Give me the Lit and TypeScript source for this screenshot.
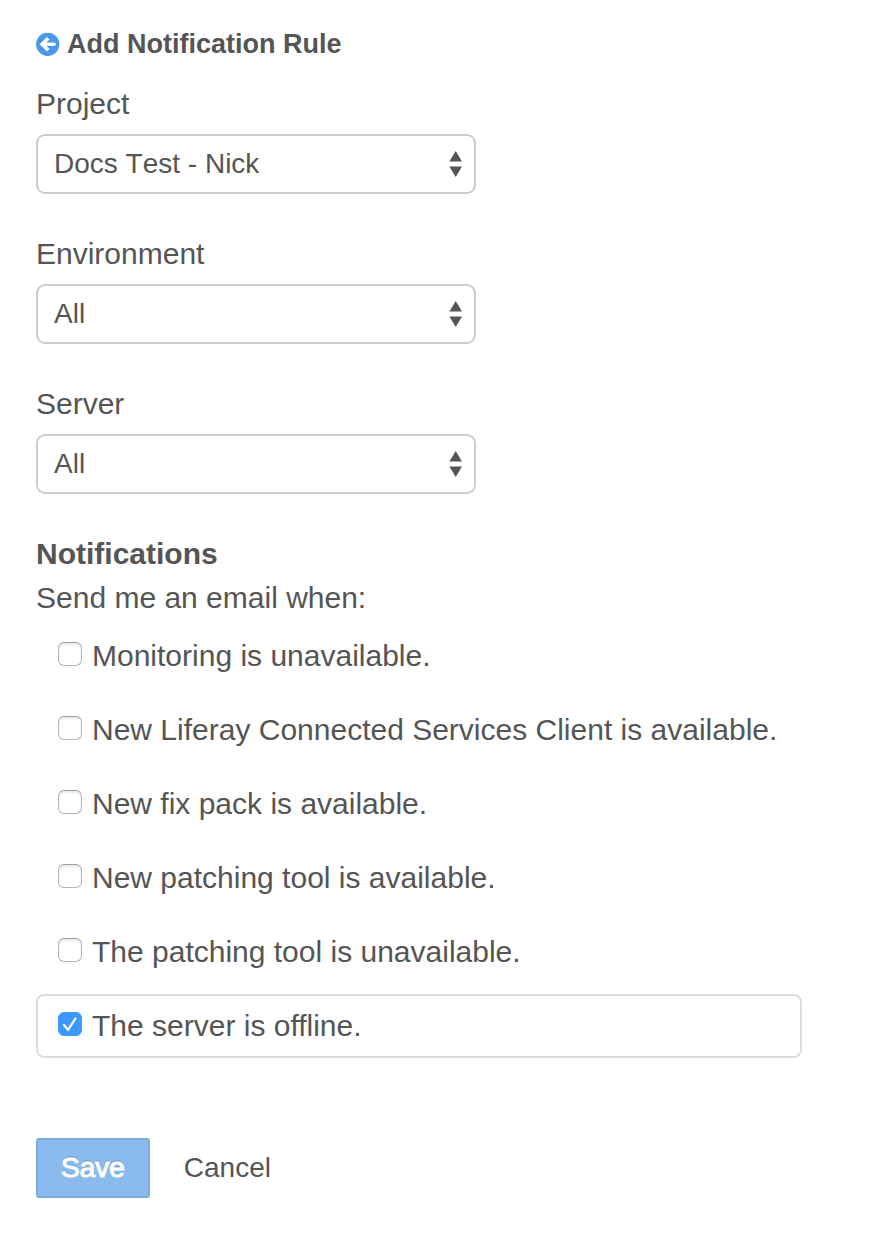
import { LitElement, html, css } from "lit";
import { customElement } from "lit/decorators.js";

interface Field {
  id: string;
  label: string;
  value: string;
}

interface Rule {
  id: string;
  label: string;
  checked: boolean;
}

const FIELDS: Field[] = [
  { id: "project", label: "Project", value: "Docs Test - Nick" },
  { id: "environment", label: "Environment", value: "All" },
  { id: "server", label: "Server", value: "All" },
];

@customElement("app-root")
export class AppRoot extends LitElement {
  static properties = { rules: { state: true } };

  declare rules: Rule[];

  static styles = css`
    :host {
      display: block;
      min-height: 100vh;
      box-sizing: border-box;
      padding: 24px 36px 44px;
      background: #fff;
      color: #555;
      font: 30px/40px "Liberation Sans", Arial, sans-serif;
    }
    * { box-sizing: border-box; }
    .title {
      display: flex;
      align-items: center;
      gap: 7px;
      margin: 0 0 20px;
      font-size: 27px;
      line-height: 40px;
    }
    .back { display: flex; }
    .field {
      display: flex;
      flex-direction: column;
      align-items: flex-start;
      margin-bottom: 40px;
    }
    .label { margin-bottom: 10px; }
    .picker {
      display: grid;
      align-items: center;
      width: 100%;
      max-width: 440px;
    }
    .select {
      grid-area: 1 / 1;
      appearance: none;
      width: 100%;
      height: 60px;
      margin: 0;
      padding: 0 44px 0 16px;
      border: 2px solid #ccc;
      border-radius: 9px;
      background: #fff;
      color: #555;
      font: 28px/40px "Liberation Sans", Arial, sans-serif;
      font-kerning: none;
    }
    .arrows {
      grid-area: 1 / 1;
      justify-self: end;
      margin-right: 13px;
      pointer-events: none;
    }
    .heading {
      margin: 0 0 4px;
      font-size: 30px;
      line-height: 40px;
    }
    .hint { margin: 0 0 6px; }
    .rules {
      display: flex;
      flex-direction: column;
      gap: 10px;
      max-width: 766px;
      margin: 0 0 80px;
      padding: 0;
      list-style: none;
    }
    .rule {
      display: flex;
      align-items: center;
      min-height: 64px;
      padding: 0 20px;
      border: 2px solid transparent;
      border-radius: 8px;
    }
    .rule.on { border-color: #ddd; }
    .row {
      display: flex;
      align-items: center;
      gap: 10px;
    }
    .box {
      appearance: none;
      flex: none;
      width: 24px;
      height: 24px;
      margin: 0 0 4px;
      border: 1px solid #b4b4b4;
      border-top-color: #a0a0a0;
      border-radius: 6px;
      background: #fff;
      box-shadow: inset 0 2px 2px #e8e8e8;
    }
    .box:checked {
      border-color: #3b99fc;
      background: #3b99fc url("data:image/svg+xml,%3Csvg xmlns='http://www.w3.org/2000/svg' viewBox='0 0 22 22'%3E%3Cpath d='M5 12l4 4.8L16.5 5.5' fill='none' stroke='%23fff' stroke-width='2.2' stroke-linecap='round' stroke-linejoin='round'/%3E%3C/svg%3E") center / 22px;
      box-shadow: none;
    }
    .actions {
      display: flex;
      align-items: center;
      gap: 34px;
    }
    .save {
      height: 60px;
      padding: 0 23px;
      border: 2px solid #7fabd9;
      border-radius: 3px;
      background: #8bbbee;
      color: #fff;
      font: 28px/40px "Liberation Sans", Arial, sans-serif;
      -webkit-text-stroke: 1px #fff;
      text-shadow: 0 -2px 1px #7da6d2;
    }
    .cancel {
      color: #555;
      font-size: 28px;
      text-decoration: none;
    }
  `;

  constructor() {
    super();
    this.rules = [
      { id: "monitoring", label: "Monitoring is unavailable.", checked: false },
      { id: "client", label: "New Liferay Connected Services Client is available.", checked: false },
      { id: "fix-pack", label: "New fix pack is available.", checked: false },
      { id: "tool-new", label: "New patching tool is available.", checked: false },
      { id: "tool-down", label: "The patching tool is unavailable.", checked: false },
      { id: "offline", label: "The server is offline.", checked: true },
    ];
  }

  private toggle(id: string) {
    this.rules = this.rules.map((r) => (r.id === id ? { ...r, checked: !r.checked } : r));
  }

  render() {
    return html`
      <h1 class="title">
        <a class="back" href="#" aria-label="Back">
          <svg width="24" height="24" viewBox="0 0 24 24" aria-hidden="true">
            <circle cx="11.7" cy="12.3" r="11.6" fill="#4a98e8" />
            <path d="M18 12.3H7" fill="none" stroke="#fff" stroke-width="3.6" stroke-linecap="round" />
            <path d="M12.2 6.3l-6 6 6 6" fill="none" stroke="#fff" stroke-width="3.6" />
          </svg>
        </a>
        <span>Add Notification Rule</span>
      </h1>
      ${FIELDS.map(
        (f) => html`
          <div class="field">
            <label class="label" for=${f.id}>${f.label}</label>
            <div class="picker">
              <select class="select" id=${f.id}><option>${f.value}</option></select>
              <svg class="arrows" width="14" height="26" viewBox="0 0 14 26" aria-hidden="true">
                <path d="M6.7 0l6.3 10.4H.4zM6.7 26L.4 15.6H13z" fill="#555" />
              </svg>
            </div>
          </div>
        `
      )}
      <h2 class="heading">Notifications</h2>
      <p class="hint">Send me an email when:</p>
      <ul class="rules">
        ${this.rules.map(
          (r) => html`
            <li class="rule ${r.checked ? "on" : ""}">
              <label class="row" for=${r.id}>
                <input class="box" type="checkbox" id=${r.id} .checked=${r.checked} @change=${() => this.toggle(r.id)} />
                <span>${r.label}</span>
              </label>
            </li>
          `
        )}
      </ul>
      <div class="actions">
        <button class="save" type="button">Save</button>
        <a class="cancel" href="#">Cancel</a>
      </div>
    `;
  }
}
